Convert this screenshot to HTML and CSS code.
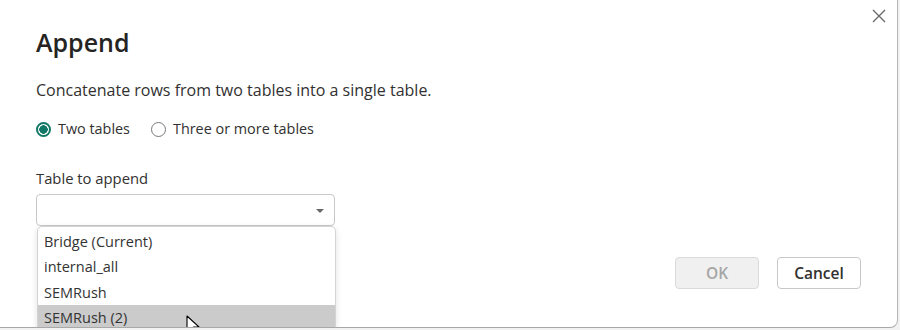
FILE: index.html
```html
<!DOCTYPE html>
<html lang="en">
<head>
    <meta charset="UTF-8">
    <meta name="viewport" content="width=device-width, initial-scale=1.0">
    <title>Append</title>
    <link rel="stylesheet" href="styles.css">
</head>
<body>
    <div class="dialog">
        <button class="close" aria-label="Close">
            <svg width="14" height="14" viewBox="0 0 14 14">
                <path d="M1 1 L13 13 M13 1 L1 13" stroke="#6b6b6b" stroke-width="1.4" fill="none"/>
            </svg>
        </button>

        <h1>Append</h1>
        <p class="desc">Concatenate rows from two tables into a single table.</p>

        <!-- Mode choice -->
        <div class="radios">
            <label class="radio checked"><span class="dot"></span>Two tables</label>
            <label class="radio"><span class="dot"></span>Three or more tables</label>
        </div>

        <!-- Table picker with open list -->
        <div class="field">
            <div class="field-label">Table to append</div>
            <div class="select">
                <span class="caret"></span>
                <ul class="options">
                    <li>Bridge (Current)</li>
                    <li>internal_all</li>
                    <li>SEMRush</li>
                    <li class="hover">SEMRush (2)</li>
                </ul>
            </div>
        </div>

        <div class="footer">
            <button class="btn" disabled>OK</button>
            <button class="btn primary">Cancel</button>
        </div>

        <svg class="cursor" width="16" height="22" viewBox="0 0 16 22">
            <path d="M1 1 L1 17 L5 13 L8 20 L10.5 19 L7.5 12 L13 12 Z" fill="#fff" stroke="#000" stroke-width="1.1" stroke-linejoin="round"/>
        </svg>
    </div>
</body>
</html>
```

FILE: styles.css
```css
body {
    margin: 0;
    padding: 0;
    background-color: #f2f2f2;
    font-family: "Open Sans", "Noto Sans", sans-serif;
    color: #323130;
}

.dialog {
    position: relative;
    box-sizing: border-box;
    width: 898px;
    height: 328px;
    padding: 24px 36px 0 36px;
    background-color: #fff;
    border-right: 1px solid #b5b5b5;
    border-bottom: 1px solid #a8a8a8;
    border-radius: 0 0 8px 0;
    overflow: hidden;
}

.close {
    position: absolute;
    top: 9px;
    right: 11px;
    width: 14px;
    height: 14px;
    padding: 0;
    border: none;
    background: none;
}

h1 {
    margin: 0;
    font-size: 25px;
    font-weight: 600;
    line-height: 36px;
    color: #252423;
}

.desc {
    margin: 19px 0 0;
    font-size: 16px;
    line-height: 22px;
}

.radios {
    display: flex;
    gap: 21px;
    margin-top: 18px;
}

.radio {
    display: flex;
    align-items: center;
    gap: 7px;
    font-size: 14.4px;
    line-height: 20px;
}

.dot {
    box-sizing: border-box;
    width: 15px;
    height: 15px;
    border: 1px solid #777;
    border-radius: 50%;
    background-color: #fff;
}

.radio.checked .dot {
    border: 2px solid #117865;
    background: radial-gradient(circle, #117865 0 4px, #fff 4.5px);
}

.field {
    margin-top: 29px;
}

.field-label {
    font-size: 14.8px;
    line-height: 20px;
}

.select {
    position: relative;
    box-sizing: border-box;
    width: 299px;
    height: 32px;
    margin-top: 6px;
    border: 1px solid #c8c8c8;
    border-radius: 4px;
    background-color: #fff;
}

.caret {
    position: absolute;
    top: 14px;
    right: 10px;
    border-left: 4px solid transparent;
    border-right: 4px solid transparent;
    border-top: 4px solid #666;
}

.options {
    position: absolute;
    top: 31px;
    left: 0;
    width: 297px;
    margin: 0;
    padding: 2px 0 0;
    list-style: none;
    background-color: #fff;
    border: 1px solid #d4d4d4;
    border-radius: 5px;
    box-shadow: 0 2px 6px rgba(0, 0, 0, 0.12);
    z-index: 2;
}

.options li {
    padding: 0 6px;
    font-size: 14.5px;
    line-height: 25.3px;
    color: #333;
}

.options li.hover {
    background-color: #cbcbcb;
}

.footer {
    display: flex;
    justify-content: flex-end;
    gap: 18px;
    margin-top: 31px;
}

.btn {
    width: 84px;
    height: 32px;
    border: 1px solid #c8c8c8;
    border-radius: 4px;
    background-color: #fff;
    font-family: inherit;
    font-size: 15.5px;
    font-weight: 600;
    color: #323130;
}

.btn:disabled {
    background-color: #f0f0f0;
    border-color: #dadada;
    color: #a6a6a6;
}

.cursor {
    position: absolute;
    left: 186px;
    top: 315px;
    z-index: 3;
}
```
